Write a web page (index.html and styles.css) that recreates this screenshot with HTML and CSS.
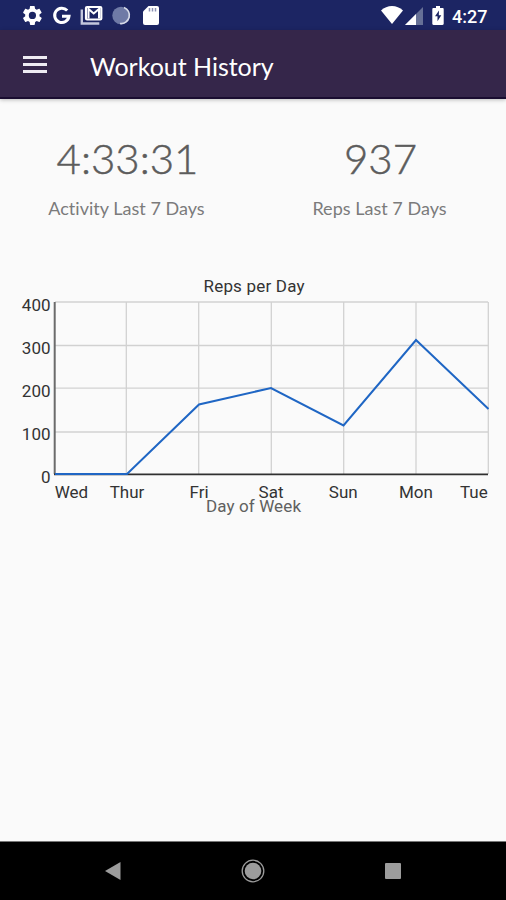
FILE: index.html
```html
<!DOCTYPE html>
<html lang="en">
<head>
  <meta charset="UTF-8">
  <meta name="viewport" content="width=device-width, initial-scale=1.0">
  <title>Workout History</title>
  <link rel="stylesheet" href="styles.css">
</head>
<body>
  <div class="status-bar">
    <svg class="status-icons" width="140" height="30" viewBox="0 0 140 30">
      <!-- settings -->
      <g transform="translate(1 4) scale(.95)" fill="#fff">
        <path d="M19.4 13c0-.3.1-.6.1-1s0-.7-.1-1l2.1-1.6c.2-.2.3-.4.1-.7l-2-3.4c-.1-.2-.4-.3-.6-.2l-2.5 1c-.5-.4-1.1-.7-1.7-1l-.4-2.6c0-.3-.2-.5-.4-.5h-4c-.3 0-.5.2-.5.4l-.4 2.7c-.6.2-1.1.6-1.7 1l-2.5-1c-.2-.1-.5 0-.6.2l-2 3.4c-.1.2-.1.5.1.7L4.5 11c0 .3-.1.6-.1 1s0 .7.1 1l-2.1 1.6c-.2.2-.3.4-.1.7l2 3.4c.1.2.4.3.6.2l2.5-1c.5.4 1.1.7 1.7 1l.4 2.6c0 .3.2.5.5.5h4c.2 0 .5-.2.5-.4l.4-2.7c.6-.2 1.1-.6 1.7-1l2.5 1c.2.1.5 0 .6-.2l2-3.4c.1-.2.1-.5-.1-.7zM12 15.8a3.800 3.800 0 1 1 0-7.600 3.800 3.800 0 0 1 0 7.600z"/>
      </g>
      <!-- google -->
      <path d="M47.2 10.500A7.200 7.200 0 1 0 49 16.300h-7" fill="none" stroke="#fff" stroke-width="3"/>
      <!-- mail -->
      <path d="M61.800 9.500v14h17.500" fill="none" stroke="#c3c7dd" stroke-width="2.400"/>
      <rect x="66" y="7" width="15.300" height="12.500" rx="1" fill="#1c2563" stroke="#fff" stroke-width="2.200"/>
      <path d="M68.500 18.500V9l5.200 4.500L79 9v9.500" fill="none" stroke="#fff" stroke-width="2"/>
      <!-- sync -->
      <circle cx="101" cy="15.500" r="8.700" fill="#6f7aa6"/>
      <path d="M104 7.500a8.300 8.300 0 0 1-4 16" fill="none" stroke="#d7dbe8" stroke-width="1.600"/>
      <!-- sd card -->
      <path d="M128.500 6H137a2 2 0 0 1 2 2v15a2 2 0 0 1-2 2h-12a2 2 0 0 1-2-2V11.500z" fill="#fff"/>
      <path d="M129.500 8v3.500M132.500 8v3.500M135.500 8v3.500" stroke="#8b91b3" stroke-width="1.500"/>
    </svg>
    <div class="status-right">
      <svg width="64" height="30" viewBox="0 0 64 30">
        <path d="M0 10.500C6 4.500 16 4.500 22 10.500L11 24z" fill="#fff"/>
        <path d="M42 7v18H24z" fill="#667096"/>
        <path d="M35 14v11H24z" fill="#fff"/>
        <path d="M55 6h4v2h2.500c.8 0 1.200.5 1.200 1.200v14.600c0 .7-.5 1.200-1.200 1.200h-9c-.7 0-1.200-.5-1.200-1.200V9.200c0-.7.5-1.200 1.200-1.200H55z" fill="#fff"/>
        <path d="M58 10.500l-4 5.800h2.500v5l3.800-6H57.800z" fill="#1c2563"/>
      </svg>
      <span class="clock">4:27</span>
    </div>
  </div>

  <header>
    <div class="menu-toggle">
      <div class="bar"></div>
      <div class="bar"></div>
      <div class="bar"></div>
    </div>
    <h1>Workout History</h1>
  </header>

  <main>
    <section class="stats">
      <div class="stat">
        <p class="value">4:33:31</p>
        <p class="label">Activity Last 7 Days</p>
      </div>
      <div class="stat">
        <p class="value">937</p>
        <p class="label">Reps Last 7 Days</p>
      </div>
    </section>

    <svg class="chart" width="506" height="250" viewBox="0 270 506 250">
      <path class="grid" d="M55 302H488M55 345.500H488M55 388.200H488M55 432H488M126.300 302V474M198.700 302V474M271.300 302V474M343.700 302V474M416 302V474M488.300 302V474"/>
      <path class="axis-y" d="M54.700 302V474"/>
      <path class="axis-x" d="M54 474.300H488"/>
      <polyline class="line" points="55,474 127,474 199,404.500 271,388 343.500,425.500 416,340 488.500,409"/>

      <text class="title" x="254" y="292.400" textLength="101">Reps per Day</text>

      <g class="y-labels">
        <text x="50.500" y="311">400</text>
        <text x="50.500" y="354">300</text>
        <text x="50.500" y="397">200</text>
        <text x="50.500" y="440.400">100</text>
        <text x="50.500" y="483.400">0</text>
      </g>

      <g class="x-labels">
        <text x="71.500" y="497.800">Wed</text>
        <text x="127" y="497.800">Thur</text>
        <text x="199" y="497.800">Fri</text>
        <text x="271" y="497.800">Sat</text>
        <text x="343.300" y="497.800">Sun</text>
        <text x="416" y="497.800">Mon</text>
        <text x="473.800" y="497.800">Tue</text>
      </g>

      <text class="caption" x="253.500" y="512" textLength="95">Day of Week</text>
    </svg>
  </main>

  <footer>
    <svg width="16" height="18" viewBox="0 0 16 18"><path d="M0 9L15.500 0v18z"/></svg>
    <svg width="24" height="24" viewBox="0 0 24 24">
      <circle cx="12" cy="12" r="8.300"/>
      <circle class="ring" cx="12" cy="12" r="10.800"/>
    </svg>
    <svg width="16" height="16" viewBox="0 0 16 16"><rect width="16" height="16" rx="1"/></svg>
  </footer>
</body>
</html>
```
FILE: styles.css
```css
* {
  box-sizing: border-box;
  margin: 0;
  padding: 0;
}

body {
  height: 900px;
  display: flex;
  flex-direction: column;
  font-family: Roboto, sans-serif;
  background: #fafafa;
  overflow: hidden;
}

.status-bar {
  height: 30px;
  display: flex;
  justify-content: space-between;
  padding: 0 18px 0 20px;
  background: #1c2563;
  color: white;
}

.status-right {
  display: flex;
  gap: 7px;
}

.clock {
  width: 36px;
  font-size: 18px;
  font-weight: 500;
  line-height: 33px;
  white-space: nowrap;
}

header {
  height: 69px;
  display: flex;
  align-items: center;
  gap: 43px;
  padding: 0 23px;
  background: #35264a;
  border-bottom: 2px solid #1a0d31;
  box-shadow: 0 1px 4px rgba(0, 0, 0, 0.25);
  color: white;
}

.menu-toggle {
  display: flex;
  flex-direction: column;
  gap: 4px;
  padding-top: 2px;
}

.bar {
  width: 24px;
  height: 3px;
  background: #eeebf2;
}

h1 {
  padding-top: 4px;
  font-family: Lato, sans-serif;
  font-size: 25px;
  font-weight: 400;
  letter-spacing: -0.02px;
}

main {
  flex: 1;
}

.stats {
  height: 171px;
  display: grid;
  grid-template-columns: 1fr 1fr;
  padding-top: 34px;
  font-family: Lato, sans-serif;
  text-align: center;
}

.value {
  padding-left: 2px;
  font-size: 42px;
  font-weight: 300;
  line-height: 50px;
  color: #5c5c5c;
  -webkit-text-stroke: 0.5px #5c5c5c;
}

.label {
  margin-top: 14px;
  font-size: 18px;
  line-height: 22px;
  letter-spacing: 0.02px;
  color: #7b7b7b;
}

.chart {
  display: block;
}

.grid {
  fill: none;
  stroke: rgba(0, 0, 0, 0.16);
  stroke-width: 1.3;
}

.axis-y {
  stroke: #6b6b6b;
  stroke-width: 2;
}

.axis-x {
  stroke: #303030;
  stroke-width: 1.8;
}

.line {
  fill: none;
  stroke: #1f66c4;
  stroke-width: 2;
}

.chart text {
  font-size: 17px;
  fill: #333;
  text-anchor: middle;
}

.chart .y-labels text {
  text-anchor: end;
}

.chart .caption {
  fill: #606060;
}

footer {
  height: 59px;
  display: flex;
  justify-content: space-between;
  align-items: center;
  padding: 0 105px;
  background: black;
  border-top: 1px solid #777;
  fill: #9c9c9c;
}

.ring {
  fill: none;
  stroke: #9c9c9c;
  stroke-width: 1.3;
}
```
